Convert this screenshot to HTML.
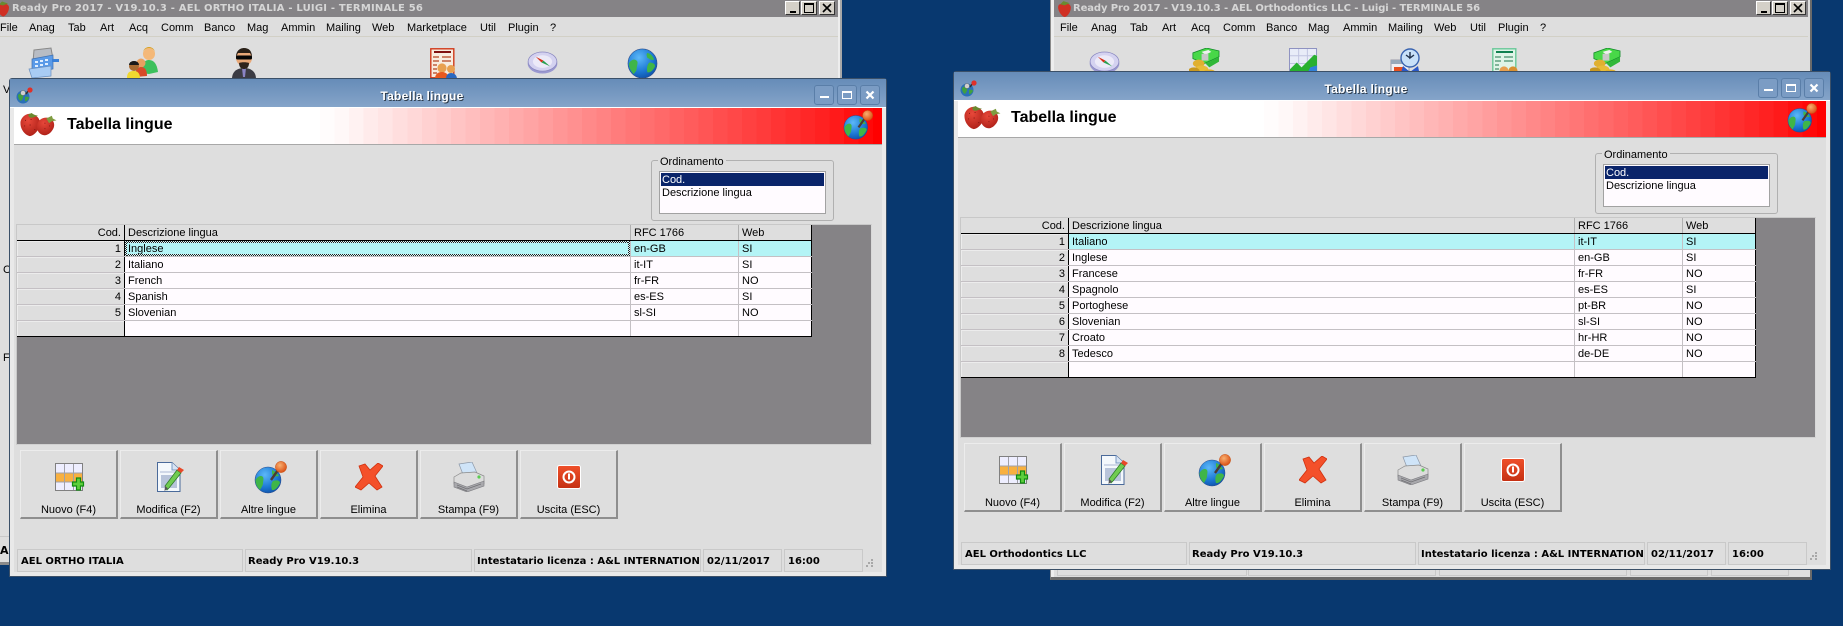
<!DOCTYPE html>
<html><head><meta charset="utf-8"><title>Tabella lingue</title>
<style>
html,body{margin:0;padding:0}
body{position:relative;width:1843px;height:626px;overflow:hidden;background:#08386f;font:11px/15px "Liberation Sans",sans-serif;color:#000}
div,span,svg{box-sizing:border-box}
.a,.m,.i,.bt{position:absolute}
.m{white-space:nowrap;top:21px;line-height:15px}
.b{font-family:"DejaVu Sans","Liberation Sans",sans-serif;font-weight:700;font-size:10px;white-space:nowrap}
.back{position:absolute;background:#dedede}
.btitle{position:absolute;top:0;height:17px;background:#858386;color:#d6d6d6;line-height:18px;overflow:hidden}
.sep{position:absolute;top:36px;height:1px;background:#d2d0c6}
.wb{position:absolute;top:1px;height:14px;width:15px;background:#d4d0c8;border:1px solid;border-color:#fff #333 #333 #fff}
.f{position:absolute;width:0;height:0}
.win{position:absolute;left:9px;top:78px;width:878px;height:499px;background:#e9e9e9;border:1px solid #3b5068;border-top-left-radius:3px;border-top-right-radius:3px}
.tt{position:absolute;left:10px;top:79px;width:876px;height:28px;background:linear-gradient(#668cb8,#85a4c9)}
.ttx{position:absolute;left:10px;width:824px;top:89px;text-align:center;color:#fff;font-weight:700;font-size:12px;letter-spacing:.3px;line-height:15px;text-shadow:1px 1px 0 #2c3a4a}
.body{position:absolute;left:14px;top:108px;width:868px;height:464px;background:#dedede}
.hdr{position:absolute;left:14px;top:108px;width:868px;height:37px;border-bottom:1px solid #a8a8a8;background:linear-gradient(90deg,#fff 306px,#fffcfc 306px 320.5px,#fff8f8 320.5px 335px,#fff2f2 335px 349.6px,#ffebeb 349.6px 364.2px,#ffe5e5 364.2px 378.7px,#ffdede 378.7px 393.3px,#ffd8d8 393.3px 407.8px,#ffd1d1 407.8px 422.4px,#ffcbcb 422.4px 437px,#ffc4c4 437px 451.5px,#ffbebe 451.5px 466px,#ffb7b7 466px 480.6px,#ffb1b1 480.6px 495.2px,#ffaaaa 495.2px 509.7px,#ffa4a4 509.7px 524.3px,#ff9d9d 524.3px 538.8px,#ff9696 538.8px 553.4px,#ff9090 553.4px 568px,#ff8989 568px 582.5px,#ff8383 582.5px 597px,#ff7c7c 597px 611.6px,#ff7676 611.6px 626.2px,#ff6f6f 626.2px 640.7px,#ff6969 640.7px 655.3px,#ff6262 655.3px 669.8px,#ff5c5c 669.8px 684.4px,#ff5555 684.4px 699px,#ff4e4e 699px 713.5px,#ff4848 713.5px 728px,#ff4141 728px 742.6px,#ff3b3b 742.6px 757.2px,#ff3434 757.2px 771.7px,#ff2e2e 771.7px 786.3px,#ff2727 786.3px 800.8px,#ff2121 800.8px 815.4px,#ff1a1a 815.4px 830px,#ff1010 830px 844.5px,#ff0808 844.5px 859px,#f00 859px)}
.htx{position:absolute;left:67px;top:116px;font-weight:700;font-size:16px;line-height:18px;white-space:nowrap}
.tb{position:absolute;top:85px;width:20px;height:20px;border:1px solid #5a7ea8;border-radius:3px;background:#7b9cc4}
.gb{position:absolute;left:651px;top:160px;width:183px;height:61px;border:1px solid #b0b0b0;border-radius:3px}
.gl{position:absolute;left:658px;top:155px;padding:0 2px;background:#dedede;font-size:11px;white-space:nowrap}
.lb{position:absolute;left:659px;top:171px;width:167px;height:43px;background:#fffbff;border:1px solid #a2a2a2}
.ls{position:absolute;left:661px;top:173px;width:163px;height:13px;background:#0a246a}
.gridbg{position:absolute;left:16px;top:224px;width:856px;height:221px;background:#858386;border:1px solid #c8c8c8;border-right-color:#d8d8d8;border-bottom-color:#d0d0d0}
.grid{position:absolute;left:17px;top:225px;width:795px}
.r{display:flex;height:16px;background:#fffbff;border-bottom:1px solid #c4c0c4}
.r span{display:block;height:15px;line-height:17px;padding-left:3px;white-space:nowrap;overflow:hidden;border-right:1px solid #c4c0c4}
.r .h{width:108px;background:#dedede;border-right:1px solid #000;text-align:right;padding:0 3px 0 0;box-shadow:inset 1px 1px 0 #ececec}
.r .d{width:506px}
.r .x{width:108px}
.r .w{width:73px;border-right:1px solid #000}
.r.top{background:#dedede;border-bottom:1px solid #000}
.r.top span{border-right-color:#b0b0b0}
.r.top .h{border-right-color:#000;box-shadow:none}
.r.top .w{border-right-color:#000}
.r.sel{background:#b4f4f6}
.r.sel .h{background:#dedede}
.r.last{border-bottom:1px solid #000}
.dq{position:absolute;background:repeating-conic-gradient(#222 0 25%,#d8f8fa 0 50%) 0 0/2px 2px}
.bt{top:450px;width:98px;height:69px;background:#dedede;border:1px solid;border-color:#ececec #8e8e8e #8e8e8e #ececec;border-width:1px 2px 2px 1px;text-align:center;padding-top:52px;line-height:15px;white-space:nowrap}
.sb{position:absolute;top:549px;height:23px;border:1px solid #c9c9c9;line-height:23px;padding-left:3px;overflow:hidden;white-space:nowrap}
.i{overflow:visible}
.t{position:absolute;white-space:nowrap}
</style></head>
<body>
<svg width="0" height="0" style="position:absolute">
<defs>
<radialGradient id="gb" cx=".38" cy=".3" r=".8"><stop offset="0" stop-color="#5cb8f8"/><stop offset=".6" stop-color="#1c78d4"/><stop offset="1" stop-color="#0c4aa0"/></radialGradient>
<radialGradient id="go" cx=".4" cy=".35" r=".7"><stop offset="0" stop-color="#f8b070"/><stop offset="1" stop-color="#d84a10"/></radialGradient>
<radialGradient id="sr" cx=".4" cy=".3" r=".8"><stop offset="0" stop-color="#e8483a"/><stop offset="1" stop-color="#a81c14"/></radialGradient>
<linearGradient id="gs" x1="0" y1="0" x2="0" y2="1"><stop offset="0" stop-color="#f0502a"/><stop offset="1" stop-color="#c43012"/></linearGradient>
<symbol id="straw" viewBox="0 0 40 26"><path d="M13 1C19 2 23 7 22 13C21 19 15 25 11 25C6 24 1 18 1 11C1 5 7 0 13 1Z" fill="url(#sr)"/><path d="M29 5C35 5 39 10 37 16C35 21 30 25 26 24C21 23 18 18 19 13C20 8 24 5 29 5Z" fill="url(#sr)"/><path d="M6 8h1M12 7h1M5 14h1M11 13h1M16 18h1M27 11h1M32 14h1M27 17h1" stroke="#7c1410" stroke-width="1"/><path d="M9 2l4-2l3 2l4 1l-6 2l-3 0z" fill="#6a8a30"/><path d="M29 6l6-3l1 3l4 2l-5 1l-3 2z" fill="#7f9c40"/></symbol>
<symbol id="globe" viewBox="0 0 32 32"><circle cx="16" cy="16" r="15" fill="url(#gb)" stroke="#2a4a8a" stroke-width=".6"/><path d="M2 16C4 12 8 11 10 13C12 15 10 18 10 21C10 24 8 25 7 27C4 24 2 20 2 16ZM21 5C25 6 27 9 28 12C25 13 23 11 21 10C20 8 20 6 21 5ZM23 15C26 15 29 16 29 19C27 23 24 26 21 25C20 21 21 17 23 15Z" fill="#3fb548"/></symbol>
<symbol id="globepin" viewBox="0 0 34 34"><circle cx="14" cy="19" r="13" fill="url(#gb)" stroke="#2a4a8a" stroke-width=".5"/><path d="M1.5 19C4 15 7 14 9 16C10 18 9 20 9 23C8 26 7 27 6 29C3 26 1.5 23 1.5 19ZM18 9C21 10 23 12 25 15C22 16 19 15 18 13ZM19 20C22 19 26 19 26 22C24 26 21 30 18 29C17 26 17 22 19 20Z" fill="#3fb548"/><path d="M17 19L24 9" stroke="#4c3a34" stroke-width="2.4"/><circle cx="27" cy="6" r="5.6" fill="url(#go)" stroke="#c85010" stroke-width=".5"/></symbol>
<symbol id="new" viewBox="0 0 30 30"><rect x=".5" y=".5" width="27" height="27" fill="#eef" stroke="#808080"/><rect x="1" y="10" width="26" height="9" fill="#f8b040"/><path d="M9.5 1v26M18.5 1v26M1 10h26M1 19h26" stroke="#a0a0a8" stroke-width="1"/><path d="M19 17h4v-4h4v4h3v4h-3v4h-4v-4h-4z" transform="translate(-1.5 2)" fill="#5ccf3c" stroke="#118a10" stroke-width="1.2"/></symbol>
<symbol id="edit" viewBox="0 0 28 30"><path d="M.5.5H15L23 8V29.5H.5Z" fill="#f4f8fc" stroke="#4a6a9a"/><path d="M15 .5V8H23" fill="#d8e4f4" stroke="#7a9ac4"/><rect x="3" y="9" width="18" height="2" fill="#d0d8e8"/><rect x="4" y="13" width="16" height="13" fill="#b8c4da"/><path d="M10 28L8 24L20 8L24 11L12 26Z" fill="#70cc50" stroke="#2f7a2a" stroke-width=".8"/><path d="M8 24L7.5 29L11 26.5Z" fill="#555"/><path d="M20 8L22 5L27 8L24 11Z" fill="#e84828"/></symbol>
<symbol id="x" viewBox="0 0 28 28"><path d="M4 3L10 1L15 7L23 0L28 3L20 13L27 24L22 27L14 20L6 27L0 24L8 14Z" fill="#f4502a" stroke="#d0300e" stroke-width=".8"/></symbol>
<symbol id="print" viewBox="0 0 32 30"><path d="M6 2L19 0L24 11L11 15Z" fill="#cfe4f8" stroke="#8c98a8" stroke-width=".7"/><path d="M1 15L8 11L22 10L31 14V22L14 27L1 22Z" fill="#dcdcdc" stroke="#8a8a8a" stroke-width=".7"/><path d="M1 20L14 25L31 19V24L14 30L1 25Z" fill="#a8a8ac" stroke="#7c7c80" stroke-width=".6"/><path d="M4 23l10 4l14-5M4 25l10 4" stroke="#707074" stroke-width=".7" fill="none"/><circle cx="26" cy="15" r="1.6" fill="#5acc50"/></symbol>
<symbol id="exit" viewBox="0 0 24 24"><rect x=".5" y=".5" width="23" height="23" rx="2" fill="url(#gs)" stroke="#fff"/><circle cx="12" cy="12" r="5.5" fill="none" stroke="#fff" stroke-width="2"/><path d="M12 8.5v6" stroke="#fff" stroke-width="2"/></symbol>
<symbol id="cash" viewBox="0 0 32 32"><path d="M7 3L24 1L26 12L6 15Z" fill="#b8bcc4" stroke="#888"/><path d="M5 12L26 8V22L5 26Z" fill="#5a9ae8" stroke="#4070b0" stroke-width=".7"/><path d="M8 15h3M13 14h3M18 13h3M8 19h3M13 18h3M18 17h3" stroke="#dfeeff" stroke-width="2"/><path d="M2 22L24 19V29L5 31Z" fill="#a8ccf4" stroke="#6a90c0" stroke-width=".7"/><path d="M25 12h7v3h-7z" fill="#3a80d8"/></symbol>
<symbol id="people" viewBox="0 0 32 32"><circle cx="22" cy="7" r="6" fill="#f4b878"/><path d="M16 6a6 6 0 0 1 12 0a6 5 0 0 0-12 0" fill="#d8a020"/><path d="M14 26C14 16 18 13 22 13C27 13 30 17 31 25L22 27Z" fill="#3cc05c"/><circle cx="14" cy="16" r="4.5" fill="#e8a060"/><path d="M8 30C8 22 11 20 14 20C18 20 20 23 20 29Z" fill="#d84a28"/><circle cx="7" cy="19" r="5" fill="#a86a30"/><path d="M2 18a5 4 0 0 1 10 0z" fill="#1a1a1a"/><path d="M0 31C0 25 3 24 7 24C11 24 13 27 13 31Z" fill="#f0d830"/></symbol>
<symbol id="spy" viewBox="0 0 26 32"><path d="M1 31C1 22 8 20 13 20C18 20 25 22 25 31Z" fill="#3c3c44"/><path d="M11 20h4l-1 9h-2z" fill="#8a84c4"/><circle cx="13" cy="10" r="8" fill="#e8a878"/><path d="M5 9C5 2 10 0 13 0C18 0 21 3 21 9L19 5H7Z" fill="#2a2018"/><rect x="5" y="7.5" width="16" height="4" rx="1.5" fill="#050505"/><path d="M8 15C10 14 16 14 18 15C18 20 15 21 13 21C11 21 8 20 8 15Z" fill="#30241c"/></symbol>
<symbol id="rep" viewBox="0 0 28 32"><rect x=".8" y=".8" width="23" height="29" fill="#f8ece0" stroke="#d03818" stroke-width="1.4"/><path d="M4 4h17" stroke="#801010" stroke-width="2"/><path d="M3 9h6M12 9h9M3 13h6M12 13h9M3 17h4M3 21h4M3 25h4" stroke="#c06040" stroke-width="1.6"/><circle cx="12" cy="20" r="4.6" fill="#e8a050"/><path d="M5 31C5 26 8 24 12 24C16 24 19 27 19 31Z" fill="#e85a20"/><circle cx="21" cy="21" r="4" fill="#e8a050"/><path d="M16 31C16 27 18 25 21 25C25 25 27 28 27 31Z" fill="#2a68c0"/></symbol>
<symbol id="repg" viewBox="0 0 28 32"><rect x=".8" y=".8" width="23" height="29" fill="#e0f4e8" stroke="#68c898" stroke-width="1.4"/><path d="M4 4h17" stroke="#108050" stroke-width="2"/><path d="M3 9h6M12 9h9M3 13h6M12 13h9M3 17h4M3 21h4" stroke="#60a080" stroke-width="1.6"/><circle cx="12" cy="23" r="4.6" fill="#e8a050"/><circle cx="21" cy="23" r="4.6" fill="#d89030"/></symbol>
<symbol id="comp" viewBox="0 0 32 24"><ellipse cx="16" cy="13" rx="15.5" ry="10.5" fill="#9a98d0"/><ellipse cx="16" cy="11" rx="15" ry="10" fill="#d4d2f0" stroke="#8a88c0" stroke-width=".8"/><ellipse cx="16" cy="11" rx="10" ry="6.6" fill="#eceaf8"/><path d="M9 6L17 10L15 12Z" fill="#d83018"/><path d="M24 16L17 10L15 12Z" fill="#28a050"/></symbol>
<symbol id="money" viewBox="0 0 32 32"><path d="M4 5L18 0L31 3V9L16 16L4 11Z" fill="#48d848" stroke="#108a28" stroke-width=".8"/><path d="M13 4l7-2l3 2l-6 3z" fill="#f0f0f0"/><rect x="13" y="6" width="7" height="7" fill="#c8c8c8"/><path d="M17 16L31 9V14L21 20Z" fill="#30b838"/><ellipse cx="10" cy="16" rx="6" ry="4" fill="#e0b030"/><ellipse cx="13" cy="22" rx="7" ry="4" fill="#e8bc38"/><ellipse cx="5" cy="24" rx="6" ry="4" fill="#c89820"/><ellipse cx="21" cy="25" rx="6" ry="3" fill="#e0b030"/></symbol>
<symbol id="chart" viewBox="0 0 30 32"><rect x=".5" y=".5" width="28" height="31" fill="#e8ecf8" stroke="#8c90c0"/><path d="M10 1v31M19 1v31M1 8h28M1 16h28" stroke="#c0c4e0"/><path d="M1 22L8 15L13 20L26 7L29 8V32H1Z" fill="#28b030"/><path d="M16 32L22 20L29 18V32Z" fill="#3080d8"/></symbol>
<symbol id="clock" viewBox="0 0 30 32"><rect x="1" y="12" width="18" height="19" fill="#f0f0f4" stroke="#9a9aa8"/><rect x="1" y="12" width="18" height="4" fill="#9ab"/><path d="M4 21h9" stroke="#e85020" stroke-width="4"/><circle cx="20" cy="10" r="9" fill="#c8e0f8" stroke="#3a64b0" stroke-width="1.4"/><path d="M20 4l0 6l4-3M16 7l4 3" stroke="#20304a" stroke-width="1.4" fill="none"/><path d="M13 18L20 24L28 18L30 28L20 32L10 28Z" fill="#2a58c8"/></symbol>
<symbol id="tico" viewBox="0 0 17 17"><circle cx="7" cy="10" r="6.5" fill="#2a70b8"/><path d="M2 8c2-2 4-2 5 0s-1 5-2 6c-2-1-3-3-3-6ZM9 10c2-1 4 0 4 1-1 2-3 4-4 3z" fill="#40a040"/><circle cx="7" cy="6" r="2.5" fill="#d0d0d0" stroke="#555" stroke-width=".4"/><path d="M10 7L13 3" stroke="#333" stroke-width="1.5"/><circle cx="14" cy="3" r="2.6" fill="#e03028"/></symbol>
</defs>
</svg>

<!-- back window 1 -->
<div class="back" style="left:0;top:0;width:842px;height:565px;border-right:2px solid #a8a8a8;border-bottom:3px solid #8a8a8a"></div>
<div class="a" style="left:838px;top:0;width:2px;height:565px;background:#ededed"></div>
<div class="btitle b" style="left:0;width:838px;padding-left:12px;letter-spacing:.2px">Ready Pro 2017 - V19.10.3 - AEL ORTHO ITALIA - LUIGI - TERMINALE 56</div>
<svg class="i" style="left:-3px;top:0;width:13px;height:17px" viewBox="0 0 13 16"><path d="M2 4C6 2 12 3 12 7C12 12 8 16 6 16C3 15 0 10 0 7C0 5 1 4 2 4Z" fill="#d03024"/><path d="M2 4l3-3l3 1l3 1l-5 2z" fill="#6a8a30"/></svg>
<div class="wb" style="left:785px"><div class="a" style="left:4px;bottom:1px;width:6px;height:2px;background:#000"></div></div>
<div class="wb" style="left:801px;width:16px"><div class="a" style="left:2px;top:1px;width:10px;height:10px;border:1px solid #000;border-top-width:2px"></div></div>
<div class="wb" style="left:819px;width:16px"><svg class="i" style="left:2px;top:1px;width:10px;height:10px" viewBox="0 0 10 10"><path d="M1 1L9 9M9 1L1 9" stroke="#000" stroke-width="1.6"/></svg></div>
<div class="sep" style="left:0;width:838px"></div>
<span class="m" style="left:0">File</span><span class="m" style="left:29px">Anag</span><span class="m" style="left:68px">Tab</span><span class="m" style="left:100px">Art</span><span class="m" style="left:129px">Acq</span><span class="m" style="left:161px">Comm</span><span class="m" style="left:204px">Banco</span><span class="m" style="left:247px">Mag</span><span class="m" style="left:281px">Ammin</span><span class="m" style="left:326px">Mailing</span><span class="m" style="left:372px">Web</span><span class="m" style="left:407px">Marketplace</span><span class="m" style="left:480px">Util</span><span class="m" style="left:508px">Plugin</span><span class="m" style="left:550px">?</span>
<svg class="i" style="left:27px;top:47px;width:32px;height:32px"><use href="#cash"/></svg>
<svg class="i" style="left:127px;top:47px;width:32px;height:32px"><use href="#people"/></svg>
<svg class="i" style="left:231px;top:48px;width:26px;height:32px"><use href="#spy"/></svg>
<svg class="i" style="left:430px;top:48px;width:28px;height:32px"><use href="#rep"/></svg>
<svg class="i" style="left:527px;top:51px;width:31px;height:23px"><use href="#comp"/></svg>
<svg class="i" style="left:627px;top:48px;width:31px;height:31px"><use href="#globe"/></svg>
<span class="t" style="left:3px;top:83px">V</span><span class="t" style="left:3px;top:263px">C</span><span class="t" style="left:3px;top:351px">F</span>
<div class="a" style="left:0;top:536px;width:10px;height:1px;background:#c8c8c8"></div>
<span class="t b" style="left:0;top:543px;font-size:11px">A</span>

<!-- back window 2 -->
<div class="back" style="left:1050px;top:0;width:762px;height:580px;border-left:1px solid #8a8a8a;border-right:2px solid #6a6a6a;border-bottom:3px solid #6a6a6a;background:#dedede"></div>
<div class="a" style="left:1051px;top:0;width:3px;height:577px;background:#ededed"></div>
<div class="btitle b" style="left:1054px;width:754px;padding-left:19px;letter-spacing:-.1px"><span>Ready Pro 2017 - V19.10.3 - AEL Orthodontics LLC - Luigi - TERMINALE 56</span></div>
<svg class="i" style="left:1058px;top:0;width:14px;height:17px" viewBox="0 0 13 16"><path d="M2 4C6 2 12 3 12 7C12 12 8 16 6 16C3 15 0 10 0 7C0 5 1 4 2 4Z" fill="#d03024"/><path d="M2 4l3-3l3 1l3 1l-5 2z" fill="#6a8a30"/></svg>
<div class="wb" style="left:1756px"><div class="a" style="left:4px;bottom:1px;width:6px;height:2px;background:#000"></div></div>
<div class="wb" style="left:1772px;width:16px"><div class="a" style="left:2px;top:1px;width:10px;height:10px;border:1px solid #000;border-top-width:2px"></div></div>
<div class="wb" style="left:1790px;width:16px"><svg class="i" style="left:2px;top:1px;width:10px;height:10px" viewBox="0 0 10 10"><path d="M1 1L9 9M9 1L1 9" stroke="#000" stroke-width="1.6"/></svg></div>
<div class="sep" style="left:1054px;width:754px"></div>
<span class="m" style="left:1060px">File</span><span class="m" style="left:1091px">Anag</span><span class="m" style="left:1130px">Tab</span><span class="m" style="left:1162px">Art</span><span class="m" style="left:1191px">Acq</span><span class="m" style="left:1223px">Comm</span><span class="m" style="left:1266px">Banco</span><span class="m" style="left:1308px">Mag</span><span class="m" style="left:1343px">Ammin</span><span class="m" style="left:1388px">Mailing</span><span class="m" style="left:1434px">Web</span><span class="m" style="left:1470px">Util</span><span class="m" style="left:1498px">Plugin</span><span class="m" style="left:1540px">?</span>
<svg class="i" style="left:1089px;top:51px;width:31px;height:23px"><use href="#comp"/></svg>
<svg class="i" style="left:1189px;top:48px;width:31px;height:31px"><use href="#money"/></svg>
<svg class="i" style="left:1289px;top:48px;width:29px;height:31px"><use href="#chart"/></svg>
<svg class="i" style="left:1390px;top:48px;width:30px;height:32px"><use href="#clock"/></svg>
<svg class="i" style="left:1492px;top:48px;width:28px;height:32px"><use href="#repg"/></svg>
<svg class="i" style="left:1590px;top:48px;width:31px;height:31px"><use href="#money"/></svg>
<div class="a" style="left:1057px;top:560px;width:190px;height:16px;border:1px solid #c9c9c9"></div>
<div class="a" style="left:1248px;top:560px;width:188px;height:16px;border:1px solid #c9c9c9"></div>
<div class="a" style="left:1439px;top:560px;width:188px;height:16px;border:1px solid #c9c9c9"></div>
<div class="a" style="left:1630px;top:560px;width:78px;height:16px;border:1px solid #c9c9c9"></div>
<div class="a" style="left:1711px;top:560px;width:78px;height:16px;border:1px solid #c9c9c9"></div>

<!-- front window 1 -->
<div class="f" style="left:0;top:0">
<div class="win"></div><div class="tt"></div><div class="a" style="left:10px;top:107px;width:876px;height:1px;background:#fff"></div><div class="body"></div><div class="hdr"></div>
<svg class="i" style="left:16px;top:87px;width:17px;height:17px"><use href="#tico"/></svg>
<div class="ttx">Tabella lingue</div>
<div class="tb" style="left:814px"><div class="a" style="left:5px;top:10px;width:9px;height:2px;background:#fff"></div></div>
<div class="tb" style="left:837px"><div class="a" style="left:4px;top:5px;width:10px;height:8px;border:1px solid #fff;border-top-width:2px"></div></div>
<div class="tb" style="left:860px"><svg class="i" style="left:4px;top:4px;width:10px;height:10px" viewBox="0 0 10 10"><path d="M1.5 1.5L8.5 8.5M8.5 1.5L1.5 8.5" stroke="#fff" stroke-width="2.2"/></svg></div>
<svg class="i" style="left:19px;top:113px;width:38px;height:24px"><use href="#straw"/></svg>
<div class="htx">Tabella lingue</div>
<svg class="i" style="left:843px;top:110px;width:31px;height:31px"><use href="#globepin"/></svg>
<div class="gb"></div><div class="gl">Ordinamento</div>
<div class="lb"></div><div class="ls"></div>
<span class="t" style="left:662px;top:173px;color:#fff">Cod.</span><span class="t" style="left:662px;top:186px">Descrizione lingua</span>
<div class="gridbg"></div>
<div class="grid">
<div class="r top"><span class="h">Cod.</span><span class="d">Descrizione lingua</span><span class="x">RFC 1766</span><span class="w">Web</span></div>
<div class="r sel"><span class="h">1</span><span class="d">Inglese</span><span class="x">en-GB</span><span class="w">SI</span></div>
<div class="r"><span class="h">2</span><span class="d">Italiano</span><span class="x">it-IT</span><span class="w">SI</span></div>
<div class="r"><span class="h">3</span><span class="d">French</span><span class="x">fr-FR</span><span class="w">NO</span></div>
<div class="r"><span class="h">4</span><span class="d">Spanish</span><span class="x">es-ES</span><span class="w">SI</span></div>
<div class="r"><span class="h">5</span><span class="d">Slovenian</span><span class="x">sl-SI</span><span class="w">NO</span></div>
<div class="r last"><span class="h"></span><span class="d"></span><span class="x"></span><span class="w"></span></div>
</div>
<div class="dq" style="left:125px;top:241px;width:505px;height:2px"></div>
<div class="dq" style="left:125px;top:254px;width:505px;height:2px"></div>
<div class="dq" style="left:125px;top:241px;width:2px;height:15px"></div>
<div class="dq" style="left:628px;top:241px;width:2px;height:15px"></div>
<div class="bt" style="left:20px">Nuovo (F4)</div><div class="bt" style="left:120px">Modifica (F2)</div><div class="bt" style="left:220px">Altre lingue</div><div class="bt" style="left:320px">Elimina</div><div class="bt" style="left:420px">Stampa (F9)</div><div class="bt" style="left:520px">Uscita (ESC)</div>
<svg class="i" style="left:55px;top:463px;width:30px;height:30px"><use href="#new"/></svg>
<svg class="i" style="left:157px;top:462px;width:28px;height:30px"><use href="#edit"/></svg>
<svg class="i" style="left:254px;top:461px;width:34px;height:34px"><use href="#globepin"/></svg>
<svg class="i" style="left:355px;top:463px;width:28px;height:28px"><use href="#x"/></svg>
<svg class="i" style="left:453px;top:462px;width:32px;height:30px"><use href="#print"/></svg>
<svg class="i" style="left:557px;top:465px;width:24px;height:24px"><use href="#exit"/></svg>
<div class="sb b" style="left:17px;width:226px">AEL ORTHO ITALIA</div>
<div class="sb b" style="left:245px;width:227px;padding-left:2px">Ready Pro V19.10.3</div>
<div class="sb b" style="left:474px;width:227px;padding-left:2px">Intestatario licenza : A&amp;L INTERNATIONAL</div>
<div class="sb b" style="left:703px;width:79px">02/11/2017</div>
<div class="sb b" style="left:784px;width:79px">16:00</div>
<svg class="i" style="left:866px;top:559px;width:8px;height:8px" viewBox="0 0 8 8"><path d="M5 0h2v2H5zM2 3h2v2H2zM5 3h2v2H5zM0 6h2v2H0zM5 6h2v2H5z" fill="#a8a8a8"/></svg>
</div>

<!-- front window 2 -->
<div class="f" style="left:944px;top:-7px">
<div class="win"></div><div class="tt"></div><div class="a" style="left:10px;top:107px;width:876px;height:1px;background:#fff"></div><div class="body"></div><div class="hdr"></div>
<svg class="i" style="left:16px;top:87px;width:17px;height:17px"><use href="#tico"/></svg>
<div class="ttx">Tabella lingue</div>
<div class="tb" style="left:814px"><div class="a" style="left:5px;top:10px;width:9px;height:2px;background:#fff"></div></div>
<div class="tb" style="left:837px"><div class="a" style="left:4px;top:5px;width:10px;height:8px;border:1px solid #fff;border-top-width:2px"></div></div>
<div class="tb" style="left:860px"><svg class="i" style="left:4px;top:4px;width:10px;height:10px" viewBox="0 0 10 10"><path d="M1.5 1.5L8.5 8.5M8.5 1.5L1.5 8.5" stroke="#fff" stroke-width="2.2"/></svg></div>
<svg class="i" style="left:19px;top:113px;width:38px;height:24px"><use href="#straw"/></svg>
<div class="htx">Tabella lingue</div>
<svg class="i" style="left:843px;top:110px;width:31px;height:31px"><use href="#globepin"/></svg>
<div class="gb"></div><div class="gl">Ordinamento</div>
<div class="lb"></div><div class="ls"></div>
<span class="t" style="left:662px;top:173px;color:#fff">Cod.</span><span class="t" style="left:662px;top:186px">Descrizione lingua</span>
<div class="gridbg"></div>
<div class="grid">
<div class="r top"><span class="h">Cod.</span><span class="d">Descrizione lingua</span><span class="x">RFC 1766</span><span class="w">Web</span></div>
<div class="r sel"><span class="h">1</span><span class="d">Italiano</span><span class="x">it-IT</span><span class="w">SI</span></div>
<div class="r"><span class="h">2</span><span class="d">Inglese</span><span class="x">en-GB</span><span class="w">SI</span></div>
<div class="r"><span class="h">3</span><span class="d">Francese</span><span class="x">fr-FR</span><span class="w">NO</span></div>
<div class="r"><span class="h">4</span><span class="d">Spagnolo</span><span class="x">es-ES</span><span class="w">SI</span></div>
<div class="r"><span class="h">5</span><span class="d">Portoghese</span><span class="x">pt-BR</span><span class="w">NO</span></div>
<div class="r"><span class="h">6</span><span class="d">Slovenian</span><span class="x">sl-SI</span><span class="w">NO</span></div>
<div class="r"><span class="h">7</span><span class="d">Croato</span><span class="x">hr-HR</span><span class="w">NO</span></div>
<div class="r"><span class="h">8</span><span class="d">Tedesco</span><span class="x">de-DE</span><span class="w">NO</span></div>
<div class="r last"><span class="h"></span><span class="d"></span><span class="x"></span><span class="w"></span></div>
</div>
<div class="bt" style="left:20px">Nuovo (F4)</div><div class="bt" style="left:120px">Modifica (F2)</div><div class="bt" style="left:220px">Altre lingue</div><div class="bt" style="left:320px">Elimina</div><div class="bt" style="left:420px">Stampa (F9)</div><div class="bt" style="left:520px">Uscita (ESC)</div>
<svg class="i" style="left:55px;top:463px;width:30px;height:30px"><use href="#new"/></svg>
<svg class="i" style="left:157px;top:462px;width:28px;height:30px"><use href="#edit"/></svg>
<svg class="i" style="left:254px;top:461px;width:34px;height:34px"><use href="#globepin"/></svg>
<svg class="i" style="left:355px;top:463px;width:28px;height:28px"><use href="#x"/></svg>
<svg class="i" style="left:453px;top:462px;width:32px;height:30px"><use href="#print"/></svg>
<svg class="i" style="left:557px;top:465px;width:24px;height:24px"><use href="#exit"/></svg>
<div class="sb b" style="left:17px;width:226px">AEL Orthodontics LLC</div>
<div class="sb b" style="left:245px;width:227px;padding-left:2px">Ready Pro V19.10.3</div>
<div class="sb b" style="left:474px;width:227px;padding-left:2px">Intestatario licenza : A&amp;L INTERNATIONAL</div>
<div class="sb b" style="left:703px;width:79px">02/11/2017</div>
<div class="sb b" style="left:784px;width:79px">16:00</div>
<svg class="i" style="left:866px;top:559px;width:8px;height:8px" viewBox="0 0 8 8"><path d="M5 0h2v2H5zM2 3h2v2H2zM5 3h2v2H5zM0 6h2v2H0zM5 6h2v2H5z" fill="#a8a8a8"/></svg>
</div>
</body></html>
